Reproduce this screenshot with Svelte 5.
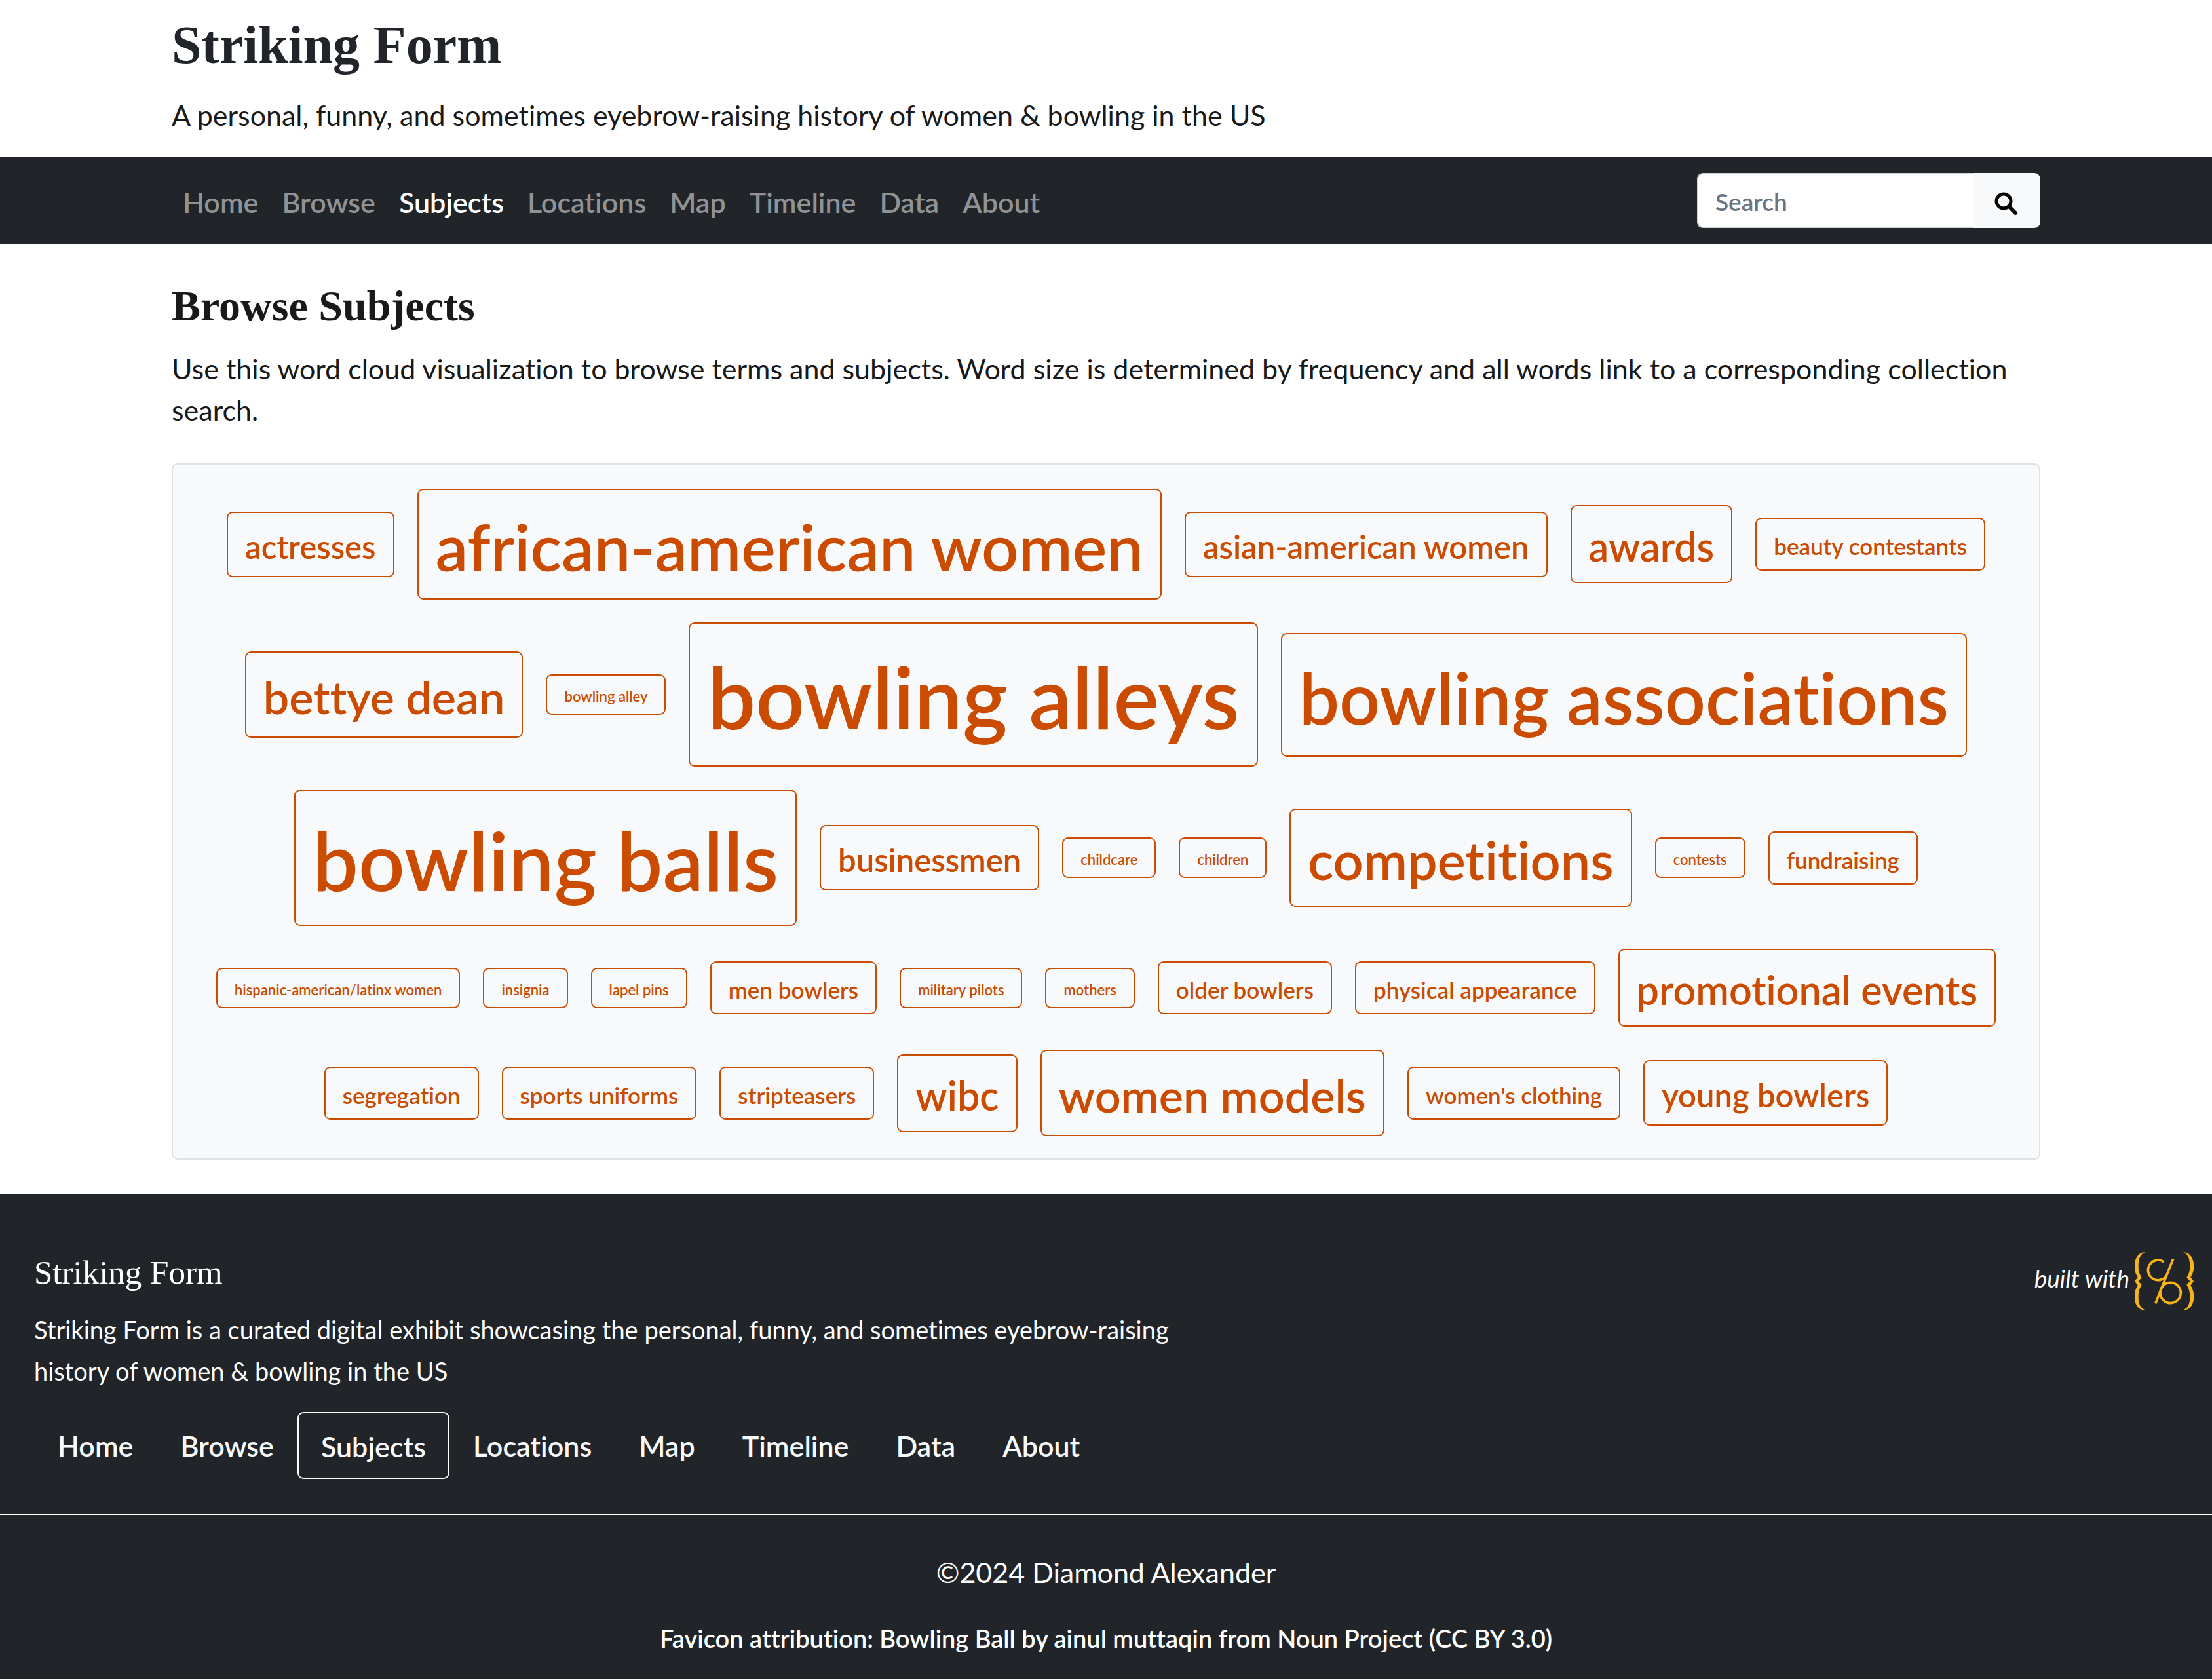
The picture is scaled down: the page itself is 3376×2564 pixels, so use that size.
<script>
  const pages = ['Home', 'Browse', 'Subjects', 'Locations', 'Map', 'Timeline', 'Data', 'About'];
  const current = 'Subjects';

  // [term, size level 1-10]
  const terms = [
    ['actresses', 3],
    ['african-american women', 7],
    ['asian-american women', 3],
    ['awards', 4],
    ['beauty contestants', 2],
    ['bettye dean', 5],
    ['bowling alley', 1],
    ['bowling alleys', 10],
    ['bowling associations', 8],
    ['bowling balls', 9],
    ['businessmen', 3],
    ['childcare', 1],
    ['children', 1],
    ['competitions', 6],
    ['contests', 1],
    ['fundraising', 2],
    ['hispanic-american/latinx women', 1],
    ['insignia', 1],
    ['lapel pins', 1],
    ['men bowlers', 2],
    ['military pilots', 1],
    ['mothers', 1],
    ['older bowlers', 2],
    ['physical appearance', 2],
    ['promotional events', 4],
    ['segregation', 2],
    ['sports uniforms', 2],
    ['stripteasers', 2],
    ['wibc', 4],
    ['women models', 5],
    ["women's clothing", 2],
    ['young bowlers', 3]
  ];
</script>

<header>
  <div class="container">
    <h1>Striking Form</h1>
    <p>A personal, funny, and sometimes eyebrow-raising history of women &amp; bowling in the US</p>
  </div>
</header>

<div class="navbar">
  <div class="container bar">
    <nav aria-label="Main">
      {#each pages as page}
        <a href="#{page.toLowerCase()}" class:active={page === current}>{page}</a>
      {/each}
    </nav>
    <form class="search" role="search">
      <input type="text" placeholder="Search" aria-label="Search" />
      <button type="button" aria-label="Submit search">
        <svg viewBox="0 0 36 36" width="36" height="36" aria-hidden="true">
          <circle cx="14" cy="14" r="11" fill="none" stroke="#000" stroke-width="5" />
          <path d="M22 22L32 32" stroke="#000" stroke-width="6" stroke-linecap="round" />
        </svg>
      </button>
    </form>
  </div>
</div>

<main class="container">
  <h2>Browse Subjects</h2>
  <p>Use this word cloud visualization to browse terms and subjects. Word size is determined by frequency and all words link to a corresponding collection search.</p>
  <div class="cloud">
    {#each terms as [term, level]}
      <a href="#search" class="tag size-{level}">{term}</a>
    {/each}
  </div>
</main>

<footer>
  <div class="top">
    <div class="about">
      <h3>Striking Form</h3>
      <p>Striking Form is a curated digital exhibit showcasing the personal, funny, and sometimes eyebrow-raising history of women &amp; bowling in the US</p>
    </div>
    <a class="built" href="#collectionbuilder">
      <span>built with</span>
      <svg viewBox="36 35 270 267" width="90" height="89" role="img" aria-label="CollectionBuilder">
        <g fill="#f8b317">
          <path d="M84 36C56 33 35 62 35 100C35 122 41 136 50 150L36 168L50 187C41 202 35 216 35 240C35 276 56 304 84 300C64 294 53 274 53 240C53 214 59 200 68 184L53 168L68 152C59 136 53 122 53 100C53 62 64 42 84 36Z" />
          <path transform="translate(342 0) scale(-1 1)" d="M84 36C56 33 35 62 35 100C35 122 41 136 50 150L36 168L50 187C41 202 35 216 35 240C35 276 56 304 84 300C64 294 53 274 53 240C53 214 59 200 68 184L53 168L68 152C59 136 53 122 53 100C53 62 64 42 84 36Z" />
        </g>
        <g fill="none" stroke="#f8b317" stroke-width="11">
          <path d="M169 79A46 46 0 1 0 182 142" />
          <path d="M212 66L131 270" />
          <circle cx="200" cy="221" r="47" />
        </g>
      </svg>
    </a>
  </div>
  <nav aria-label="Footer">
    {#each pages as page}
      <a href="#{page.toLowerCase()}" class:active={page === current}>{page}</a>
    {/each}
  </nav>
  <div class="legal">
    <p>©2024 Diamond Alexander</p>
    <p class="credit">Favicon attribution: Bowling Ball by ainul muttaqin from Noun Project (CC BY 3.0)</p>
  </div>
</footer>

<style>
  :global(body) {
    margin: 0;
    background: #fff;
    color: #191919;
    font-family: Lato, 'Open Sans', sans-serif;
    font-size: 43px;
    line-height: 63px;
    font-variant-ligatures: none;
  }
  h1, h2, h3, p { margin: 0; }
  h1, h2, h3 { font-family: 'Liberation Serif', 'Times New Roman', serif; }
  a { text-decoration: none; }

  .container { max-width: 2852px; margin: 0 auto; }

  header { padding: 20px 0 32px; }
  h1 { font-size: 82px; line-height: 98px; color: #212529; margin-bottom: 26px; }

  .navbar { background: #212529; }
  .bar { display: flex; align-items: center; justify-content: space-between; padding: 25px 0; }
  .bar nav { display: flex; gap: 36px; padding: 5px 17px 0; }
  .bar a { color: #909294; font-weight: 600; }
  .bar a.active { color: #fff; }
  .search { display: flex; width: 524px; height: 84px; }
  input {
    flex: 1;
    min-width: 0;
    box-sizing: border-box;
    border: 2px solid #ced4da;
    border-right: 0;
    border-radius: 9px 0 0 9px;
    padding: 3px 26px 0;
    background: #fff;
    color: #212529;
    font: 600 37px Lato, sans-serif;
  }
  input::placeholder { color: #6c757d; opacity: 1; }
  button {
    width: 101px;
    border: 0;
    border-radius: 0 9px 9px 0;
    background: #f8f9fa;
    padding: 10px 4px 0 0;
    display: flex;
    align-items: center;
    justify-content: center;
  }

  main { padding: 54px 0 53px; }
  h2 { font-size: 66px; line-height: 80px; margin-bottom: 24px; }

  .cloud {
    margin-top: 50px;
    border: 2px solid #dee2e6;
    border-radius: 9px;
    background: #f8f9fa;
    padding: 37px 32px 34px;
    display: flex;
    flex-wrap: wrap;
    align-items: center;
    justify-content: center;
    gap: 35px;
  }
  .tag {
    border: 2px solid #cb4b00;
    border-radius: 9px;
    padding: 16px 26px 10px;
    color: #cb4b00;
    font-weight: 600;
    white-space: nowrap;
  }
  .tag:hover { background: #cb4b00; color: #fff; }
  .size-1 { font-size: 22px; line-height: 32px; }
  .size-2 { font-size: 35px; line-height: 51px; }
  .size-3 { font-size: 49px; line-height: 70px; }
  .size-4 { font-size: 61px; line-height: 89px; }
  .size-5 { font-size: 70px; line-height: 102px; }
  .size-6 { font-size: 81px; line-height: 120px; }
  .size-7 { font-size: 99px; line-height: 139px; }
  .size-8 { font-size: 109px; line-height: 159px; }
  .size-9 { font-size: 124px; line-height: 178px; }
  .size-10 { font-size: 131px; line-height: 190px; }

  footer { background: #212529; color: #fff; padding-top: 88px; }
  .top { display: flex; justify-content: space-between; align-items: flex-start; padding: 0 28px 0 52px; }
  .about { max-width: 1800px; }
  h3 { font-size: 51px; line-height: 62px; font-weight: 400; margin-bottom: 25px; }
  .about p { font-size: 38px; }
  .built { display: flex; gap: 8px; color: #fff; font-size: 37px; font-style: italic; line-height: 80px; }
  footer nav { display: flex; padding: 31px 52px 53px; border-bottom: 2px solid #fff; }
  footer nav a { color: #f8f9fa; font-weight: 600; padding: 20px 36px 19px; }
  footer nav a.active { border: 2px solid #f8f9fa; border-radius: 9px; padding: 19px 34px 16px; }
  .legal { text-align: center; padding: 56px 0 31px; }
  .credit { font-size: 38px; font-weight: 600; margin-top: 38px; }
</style>
